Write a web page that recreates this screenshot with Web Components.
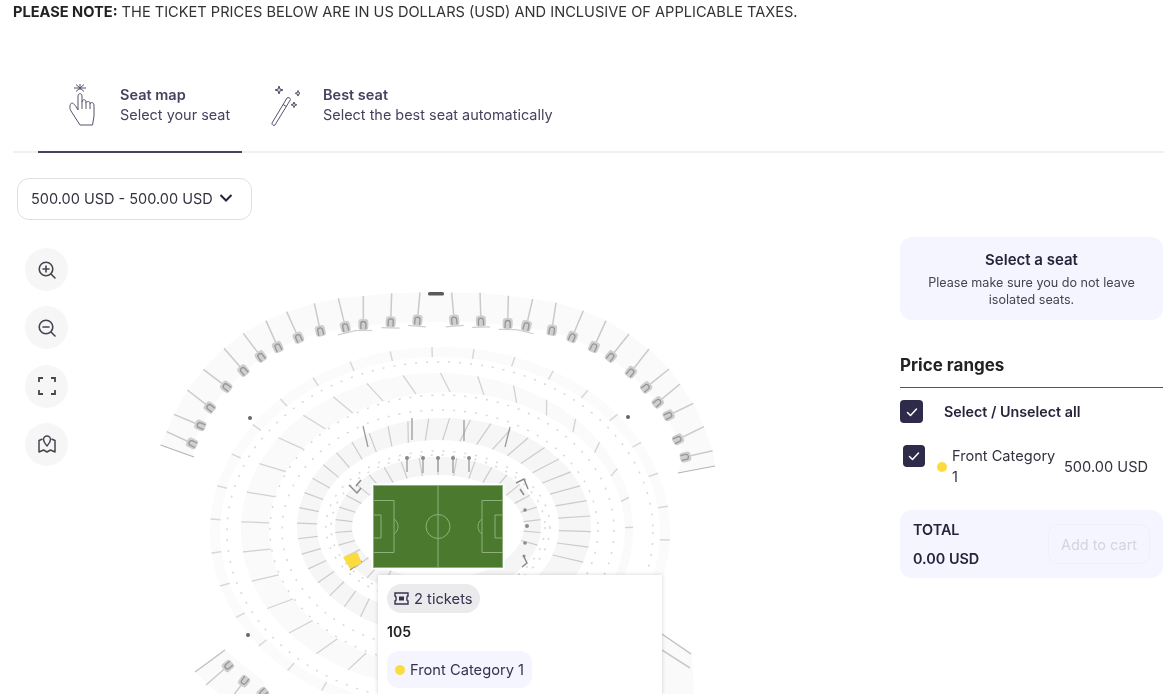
<!DOCTYPE html>
<html lang="en">
<head>
<meta charset="utf-8">
<title>Seat selection</title>
<style>
    html, body { margin: 0; height: 694px; overflow: hidden; background: #fff; }
    body { font-family: Inter, "Liberation Sans", sans-serif; color: #25243a; filter: blur(.4px); }
    svg { display: block; }
</style>
</head>
<body>
<main-layout>
    <note-bar><b>PLEASE NOTE:</b> THE TICKET PRICES BELOW ARE IN US DOLLARS (USD) AND INCLUSIVE OF APPLICABLE TAXES.</note-bar>
    <booking-tabs>
        <tab-item active title-text="Seat map" sub-text="Select your seat" style="--pad:30px;--gap:24px;--w:204px">
            <svg slot="icon" width="28" height="42" viewBox="0 0 28 42" fill="none" stroke="#55536b" stroke-width="1"><path d="M12 0v6M6 4h12M8 .500l8 7M16 .500l-8 7"/><path d="M12 41 3 27C1 24 2 19 4 19c2 0 5 5 6 7V12c0-3 4-3 4 0v6c0-3 4-3 4 0v1c0-2 4-2 4 0v1c0-2 4-2 4 1v11l-1.500 9z"/><path d="M14 18v7M18 19v6M22 20v5"/></svg>
        </tab-item>
        <tab-item title-text="Best seat" sub-text="Select the best seat automatically" style="--pad:28px;--gap:23px;--w:auto">
            <svg slot="icon" width="30" height="42" viewBox="0 0 30 42" fill="none" stroke="#55536b" stroke-width="1"><path d="M17 14c1-1 3.500 0 3.500 1.500L5 41c-1 1-3.500 0-3-2z"/><path d="M13 20.500l3.500 2"/><path d="M9 2l1 3 3 1-3 1-1 3-1-3-3-1 3-1zM28 6.500l.8 2 2 .8-2 .8-.8 2-.8-2-2-.8 2-.8zM24 18l.8 2 2 .8-2 .8-.8 2-.8-2-2-.8 2-.8z" fill="#c9c8d2"/></svg>
        </tab-item>
    </booking-tabs>
    <price-select>500.00 USD - 500.00 USD</price-select>
    <booking-body>
        <seat-map>
            <map-controls slot="controls">
                <map-button><svg width="20" height="20" viewBox="0 0 20 20" fill="none" stroke="#45454f" stroke-width="1.600" stroke-linecap="round"><circle cx="9" cy="9" r="6.800"/><path d="M14 14l4 4M9 6v6M6 9h6"/></svg></map-button>
                <map-button><svg width="20" height="20" viewBox="0 0 20 20" fill="none" stroke="#45454f" stroke-width="1.600" stroke-linecap="round"><circle cx="9" cy="9" r="6.800"/><path d="M14 14l4 4M6 9h6"/></svg></map-button>
                <map-button><svg width="20" height="20" viewBox="0 0 20 20" fill="none" stroke="#45454f" stroke-width="1.800"><path d="M2 6V2h4M14 2h4v4M18 14v4h-4M6 18H2v-4"/></svg></map-button>
                <map-button><svg width="20" height="20" viewBox="0 0 20 20" fill="none" stroke="#45454f" stroke-width="1.500" stroke-linejoin="round"><path d="M10 12C8 9.500 6.500 8 6.500 5.500a3.500 3.500 0 0 1 7 0C13.500 8 12 9.500 10 12z"/><path d="M5.500 5 2 6.500V18l4.500-2 3.500 2 3.500-2 4.500 2V6.500L14.500 5"/></svg></map-button>
            </map-controls>
            <ticket-popup slot="popup" tickets="2 tickets" block="105" category="Front Category 1"></ticket-popup>
        </seat-map>
        <side-panel>
            <info-card heading="Select a seat">Please make sure you do not leave isolated seats.</info-card>
            <price-list>
                <price-row all label="Select / Unselect all"></price-row>
                <price-row label="Front Category 1" price="500.00 USD"></price-row>
            </price-list>
            <total-bar amount="0.00 USD"></total-bar>
        </side-panel>
    </booking-body>
</main-layout>

<script>
const CHECK = `<svg width="14" height="14" viewBox="0 0 14 14" fill="none" stroke="#fff" stroke-width="1.500" stroke-linecap="round" stroke-linejoin="round"><path d="M2.500 7.500 5.500 10.500 11.500 4"/></svg>`;

class MainLayout extends HTMLElement {
    constructor() {
        super();
        this.attachShadow({ mode: 'open' });
        this.shadowRoot.innerHTML = `
            <style>:host { display: block; padding: 0 6px 0 13px; }</style>
            <slot></slot>
        `;
    }
}

class NoteBar extends HTMLElement {
    constructor() {
        super();
        this.attachShadow({ mode: 'open' });
        this.shadowRoot.innerHTML = `
            <style>
                :host { display: block; height: 24px; line-height: 25px; font-size: 14.600px; color: #333; white-space: nowrap; }
                ::slotted(b) { font-weight: 700; color: #222; }
            </style>
            <slot></slot>
        `;
    }
}

class BookingTabs extends HTMLElement {
    constructor() {
        super();
        this.attachShadow({ mode: 'open' });
        this.shadowRoot.innerHTML = `
            <style>
                :host { display: flex; margin-top: 51px; height: 78px; padding-left: 25px; border-bottom: 2px solid #f1f1f2; box-sizing: border-box; }
            </style>
            <slot></slot>
        `;
    }
}

class TabItem extends HTMLElement {
    constructor() {
        super();
        this.attachShadow({ mode: 'open' });
    }

    connectedCallback() {
        const title = this.getAttribute('title-text') || '';
        const sub = this.getAttribute('sub-text') || '';
        this.shadowRoot.innerHTML = `
            <style>
                :host { display: flex; align-items: flex-start; box-sizing: border-box; width: var(--w); height: 78px; padding: 9px 0 0 var(--pad); gap: var(--gap); color: #45425f; }
                :host([active]) { border-bottom: 2px solid #45425f; }
                .title { font-size: 14.500px; font-weight: 600; line-height: 20px; margin-top: 1px; }
                .sub { font-size: 14.450px; line-height: 20px; white-space: nowrap; }
            </style>
            <slot name="icon"></slot>
            <div>
                <div class="title">${title}</div>
                <div class="sub">${sub}</div>
            </div>
        `;
    }
}

class PriceSelect extends HTMLElement {
    constructor() {
        super();
        this.attachShadow({ mode: 'open' });
        this.shadowRoot.innerHTML = `
            <style>
                :host { display: flex; align-items: center; gap: 6px; box-sizing: border-box; width: 235px; height: 42px; margin: 25px 0 0 4px; padding: 0 0 2px 13px; border: 1px solid #dfdfe2; border-radius: 12px; font-size: 14.500px; color: #333340; white-space: nowrap; }
            </style>
            <slot></slot>
            <svg width="14" height="10" viewBox="0 0 14 10" fill="none" stroke="#25243a" stroke-width="2"><path d="M1.500 2 7 7.500 12.500 2"/></svg>
        `;
    }
}

class BookingBody extends HTMLElement {
    constructor() {
        super();
        this.attachShadow({ mode: 'open' });
        this.shadowRoot.innerHTML = `
            <style>:host { display: grid; grid-template-columns: 887px 263px; margin-top: 17px; }</style>
            <slot></slot>
        `;
    }
}

class MapControls extends HTMLElement {
    constructor() {
        super();
        this.attachShadow({ mode: 'open' });
        this.shadowRoot.innerHTML = `
            <style>:host { display: flex; flex-direction: column; gap: 15.300px; }</style>
            <slot></slot>
        `;
    }
}

class MapButton extends HTMLElement {
    constructor() {
        super();
        this.attachShadow({ mode: 'open' });
        this.shadowRoot.innerHTML = `
            <style>:host { display: flex; align-items: center; justify-content: center; width: 43px; height: 43px; border-radius: 50%; background: #f6f6f6; }</style>
            <slot></slot>
        `;
    }
}

// Outer end and gate end of the upper tier aisles, in page pixels
const UPPER_LEFT = [[50,455,130,492],[72,403,155,438],[112,330,183,385],[160,268,232,323],[222,205,283,275],[280,160,335,233],[348,122,385,205],[410,95,447,177],[493,70,512,157],[565,55,587,145],[640,48,640,138],[725,40,722,130],[810,37,802,125]]
    .map(p => [150 + p[0] / 3, 280 + p[1] / 3, 150 + p[2] / 3, 280 + p[3] / 3]);
const UPPER_RIGHT = [[65,38,73,125],[150,38,153,128],[235,47,233,135],[308,57,288,142],[378,68,365,155],[460,92,425,175],[528,122,490,205],[597,162,540,233],[657,207,600,280],[717,267,645,325],[750,312,680,370],[790,370,712,408],[822,440,740,480],[848,512,762,532]]
    .map(p => [430 + p[0] / 3, 280 + p[1] / 3, 430 + p[2] / 3, 280 + p[3] / 3]);

function ellipseBand(cx, cy, rx, ry, cx2, cy2, rx2, ry2, fill) {
    const e = (x, y, a, b) => `M${x - a} ${y}a${a} ${b} 0 1 0 ${a * 2} 0a${a} ${b} 0 1 0 ${-a * 2} 0z`;
    return `<path fill-rule="evenodd" fill="${fill}" d="${e(cx, cy, rx, ry)}${e(cx2, cy2, rx2, ry2)}"/>`;
}

function ringTicks(o, i, angles, color, width) {
    return angles.map(deg => {
        const t = deg * Math.PI / 180;
        const x1 = o[0] + o[2] * Math.cos(t), y1 = o[1] + o[3] * Math.sin(t);
        const x2 = i[0] + i[2] * Math.cos(t), y2 = i[1] + i[3] * Math.sin(t);
        return `<line x1="${x1}" y1="${y1}" x2="${x2}" y2="${y2}" stroke="${color}" stroke-width="${width}"/>`;
    }).join('');
}

function range(from, to, step) {
    const out = [];
    for (let a = from; a <= to; a += step) out.push(a);
    return out;
}

function gate(x, y, x2, y2, base) {
    const deg = Math.atan2(y2 - y, x2 - x) * 180 / Math.PI - 90;
    return `<g transform="translate(${x2} ${y2}) rotate(${deg})">
        <rect x="-5" y="-7" width="10" height="11" rx="3" fill="#cfcfcf"/>
        <path d="M-2.500 3v-5a2.500 2.500 0 0 1 5 0v5" fill="none" stroke="#969696" stroke-width="1.300"/>
        ${base ? '<line x1="-9" y1="4.500" x2="9" y2="4.500" stroke="#cfcfcf" stroke-width="1.200"/>' : ''}
    </g>`;
}

function upperTier() {
    const all = [...UPPER_LEFT, ...UPPER_RIGHT];
    const first = [160.500, 445, 194, 457];
    const last = [715, 466, 678, 473];
    const outer = [first, ...all, last].map(p => `${p[0]},${p[1]}`);
    const inner = [first, ...all, last].map(p => `${p[2]},${p[3]}`).reverse();
    let s = `<polygon fill="#fafafa" points="${outer.concat(inner).join(' ')}"/>`;
    s += all.map(p => `<line x1="${p[0]}" y1="${p[1]}" x2="${p[2]}" y2="${p[3]}" stroke="#cacaca" stroke-width="1.500"/>`).join('');
    s += all.map((p, i) => gate(...p, i >= 9 && i <= 16)).join('');
    s += `<line x1="${first[0]}" y1="${first[1]}" x2="${first[2]}" y2="${first[3]}" stroke="#b5b5b5" stroke-width="1.200"/>`;
    s += `<line x1="${last[0]}" y1="${last[1]}" x2="${last[2]}" y2="${last[3]}" stroke="#b5b5b5" stroke-width="1.200"/>`;
    s += `<rect x="428" y="292" width="16" height="3.500" rx="1.500" fill="#5a5a5a"/>`;
    // lower corners of the upper tier
    s += `<polygon fill="#fafafa" points="195,672 225,650 262,680 272,700 225,700"/>`;
    s += `<line x1="195" y1="672" x2="225" y2="650" stroke="#bdbdbd" stroke-width="1.200"/>`;
    s += [[206,685,229,665],[233,696,245,680],[250,704,264,692]].map(p => `<line x1="${p[0]}" y1="${p[1]}" x2="${p[2]}" y2="${p[3]}" stroke="#cacaca" stroke-width="1.500"/>` + gate(...p)).join('');
    s += `<polygon fill="#fafafa" points="662,634 692,652 694,700 640,700"/>`;
    s += `<line x1="662" y1="634" x2="691" y2="654" stroke="#bdbdbd" stroke-width="1.200"/>`;
    s += `<line x1="662" y1="650" x2="690" y2="668" stroke="#cacaca" stroke-width="1.500"/>`;
    return s;
}

function pitch() {
    const l = `fill="none" stroke="#8fb07c" stroke-width="1"`;
    return `<rect x="371.500" y="483.500" width="133" height="86" rx="1" fill="#fff"/>
        <rect x="373" y="485" width="130" height="83" fill="#4b7a2e"/>
        <g ${l}>
            <rect x="373.500" y="485.500" width="129" height="82"/>
            <path d="M438 485v83"/>
            <circle cx="438" cy="526.500" r="12"/>
            <path d="M373 500.500h21v52h-21M373 515h8v23h-8M394 519a9 9 0 0 1 0 15"/>
            <path d="M503 500.500h-21v52h21M503 515h-8v23h8M482 519a9 9 0 0 0 0 15"/>
        </g>`;
}

class SeatMap extends HTMLElement {
    constructor() {
        super();
        this.attachShadow({ mode: 'open' });
    }

    connectedCallback() {
        this.render();
    }

    render() {
        const ring2o = [440, 532, 230, 185], ring2i = [440, 532, 220, 175];
        const ring3o = [437, 530, 196, 157], ring3i = [447, 530, 178, 138];
        const ring4o = [444, 527, 147, 109], ring4i = [438, 527, 121, 87];
        const ring5o = [438, 527, 103, 70], ring5i = [438, 527, 86, 52];
        const darkTicks = [[363,426,368,447],[412,418,412,440],[464,420,464,441],[510,427,505,447],[407,458,407,472],[423,458,423,473],[438,458,438,472],[453,458,453,473],[469,458,469,472]];
        const seats = `
            ${upperTier()}
            ${ellipseBand(...ring2o, ...ring2i, '#fbfbfb')}
            ${ellipseBand(...ring3o, ...ring3i, '#fafafa')}
            ${ellipseBand(...ring4o, ...ring4i, '#f6f6f6')}
            ${ellipseBand(...ring5o, ...ring5i, '#f5f5f5')}
            ${ringTicks(ring2o, ring2i, range(100, 365, 10.500), '#d8d8d8', 1.500)}
            ${ringTicks(ring3o, ring3i, range(95, 365, 11), '#d2d2d2', 1.300)}
            ${ringTicks(ring4o, ring4i, range(100, 380, 8.200), '#cbcbcb', 1.200)}
            ${ringTicks(ring5o, ring5i, range(102, 380, 10.500), '#cbcbcb', 1.200)}
            <g fill="none" stroke="#d8d8d8" stroke-width="1.500" stroke-dasharray="2 9">
                <ellipse cx="440" cy="532" rx="213" ry="170"/>
                <ellipse cx="442" cy="530" rx="172" ry="135"/>
                <ellipse cx="440" cy="530" rx="158" ry="120"/>
                <ellipse cx="438" cy="527" rx="112" ry="76"/>
                <ellipse cx="438" cy="527" rx="107" ry="72"/>
            </g>
            ${darkTicks.map(p => `<line x1="${p[0]}" y1="${p[1]}" x2="${p[2]}" y2="${p[3]}" stroke="#9a9a9a" stroke-width="1.300"/>`).join('')}
            <g fill="#8a8a8a">
                ${[407, 423, 438, 453, 469].map(x => `<circle cx="${x}" cy="458" r="2"/>`).join('')}
            </g>
            <g fill="#666">
                <circle cx="250" cy="418" r="2"/>
                <circle cx="628" cy="417" r="2"/>
                <circle cx="248" cy="635" r="2"/>
            </g>
            <g fill="none" stroke="#8a8a8a" stroke-width="1.500">
                <path d="M349 485l8 8 4-5M361 480l-5 6"/>
                <path d="M516 483l8-4 4 10M520 489l4 6"/>
                <path d="M522 567l5-4-3-6"/>
                <line x1="350" y1="570" x2="362" y2="561"/>
            </g>
            <g fill="#8a8a8a">
                <circle cx="525" cy="510" r="1.800"/>
                <circle cx="527" cy="526" r="2"/>
                <circle cx="525" cy="543" r="1.800"/>
                <circle cx="524" cy="556" r="1.500"/>
            </g>
            <polygon fill="#fbdc3f" points="343,557 357,552 362,563 350,569"/>
            ${pitch()}
        `;
        this.shadowRoot.innerHTML = `
            <style>
                :host { display: block; position: relative; height: 457px; }
                svg { display: block; filter: blur(.6px); }
                .controls { position: absolute; left: 12px; top: 11px; }
                .popup { position: absolute; left: 365px; top: 338px; }
            </style>
            <svg width="887" height="457" viewBox="13 237 887 457">${seats}</svg>
            <div class="controls"><slot name="controls"></slot></div>
            <div class="popup"><slot name="popup"></slot></div>
        `;
    }
}

class TicketPopup extends HTMLElement {
    constructor() {
        super();
        this.attachShadow({ mode: 'open' });
    }

    connectedCallback() {
        this.shadowRoot.innerHTML = `
            <style>
                :host { display: block; box-sizing: border-box; width: 284px; height: 119px; padding: 9px; background: #fff; box-shadow: 0 0 4px rgba(0,0,0,.18); font-size: 14.700px; }
                .tickets { display: inline-flex; align-items: center; gap: 5px; height: 29px; padding: 0 7px; border-radius: 15px; background: #ebebee; color: #35334f; }
                .block { margin-top: 9px; height: 20px; line-height: 20px; font-size: 14px; font-weight: 600; color: #222; }
                .cat { display: inline-flex; align-items: center; gap: 5px; height: 37px; margin-top: 9px; padding: 0 8px; border-radius: 12px; background: #f4f5fe; color: #35334f; }
                .dot { width: 10px; height: 10px; border-radius: 50%; background: #fbdc3f; }
            </style>
            <div class="tickets">
                <svg width="15" height="13" viewBox="0 0 15 13" fill="none" stroke="#35334f" stroke-width="1.400"><path d="M1 1h13v3c-1.500 0-1.500 5 0 5v3H1V9c1.500 0 1.500-5 0-5z"/><rect x="5" y="4.500" width="5" height="4" fill="#35334f" stroke="none"/></svg>
                ${this.getAttribute('tickets')}
            </div>
            <div class="block">${this.getAttribute('block')}</div>
            <div class="cat"><span class="dot"></span>${this.getAttribute('category')}</div>
        `;
    }
}

class SidePanel extends HTMLElement {
    constructor() {
        super();
        this.attachShadow({ mode: 'open' });
        this.shadowRoot.innerHTML = `
            <style>:host { display: flex; flex-direction: column; }</style>
            <slot></slot>
        `;
    }
}

class InfoCard extends HTMLElement {
    constructor() {
        super();
        this.attachShadow({ mode: 'open' });
    }

    connectedCallback() {
        this.shadowRoot.innerHTML = `
            <style>
                :host { display: block; box-sizing: border-box; height: 83px; padding: 13px 20px 0; border-radius: 12px; background: #f4f5fe; text-align: center; }
                h4 { margin: 0 0 4px; font-size: 15px; font-weight: 600; line-height: 20px; color: #25243a; }
                p { margin: 0; font-size: 12.600px; line-height: 17px; color: #44434f; }
            </style>
            <h4>${this.getAttribute('heading')}</h4>
            <p><slot></slot></p>
        `;
    }
}

class PriceList extends HTMLElement {
    constructor() {
        super();
        this.attachShadow({ mode: 'open' });
        this.shadowRoot.innerHTML = `
            <style>
                :host { display: block; margin-top: 33px; }
                h3 { margin: 0; height: 34px; line-height: 24px; font-size: 17px; font-weight: 700; color: #222; border-bottom: 1.500px solid #555; box-sizing: content-box; }
                .rows { display: flex; flex-direction: column; gap: 22px; padding-top: 12px; }
            </style>
            <h3>Price ranges</h3>
            <div class="rows"><slot></slot></div>
        `;
    }
}

class PriceRow extends HTMLElement {
    constructor() {
        super();
        this.attachShadow({ mode: 'open' });
    }

    connectedCallback() {
        const label = this.getAttribute('label');
        if (this.hasAttribute('all')) {
            this.shadowRoot.innerHTML = `
                <style>
                    :host { display: flex; align-items: center; gap: 21px; height: 23px; font-size: 14.300px; font-weight: 600; color: #25243a; }
                    .box { display: flex; align-items: center; justify-content: center; width: 23px; height: 23px; border-radius: 4px; background: #2d2a4a; }
                </style>
                <div class="box">${CHECK}</div>
                <span>${label}</span>
            `;
            return;
        }
        this.shadowRoot.innerHTML = `
            <style>
                :host { display: flex; align-items: center; padding-left: 3px; height: 44px; font-size: 14.600px; color: #333340; }
                .box { display: flex; align-items: center; justify-content: center; flex: none; align-self: flex-start; width: 22px; height: 22px; border-radius: 4px; background: #2d2a4a; }
                .dot { flex: none; width: 10px; height: 10px; margin: 0 5px 0 12px; border-radius: 50%; background: #fbdc3f; }
                .name { width: 112px; line-height: 21px; }
                .price { white-space: nowrap; }
            </style>
            <div class="box">${CHECK}</div>
            <span class="dot"></span>
            <span class="name">${label}</span>
            <span class="price">${this.getAttribute('price')}</span>
        `;
    }
}

class TotalBar extends HTMLElement {
    constructor() {
        super();
        this.attachShadow({ mode: 'open' });
    }

    connectedCallback() {
        this.shadowRoot.innerHTML = `
            <style>
                :host { display: flex; align-items: center; justify-content: space-between; box-sizing: border-box; height: 68px; margin-top: 21px; padding: 0 13px; border-radius: 12px; background: #f4f5fe; font-size: 14.400px; font-weight: 600; color: #25243a; }
                .lines { display: flex; flex-direction: column; gap: 9px; line-height: 20px; }
                .cart { display: flex; align-items: center; justify-content: center; width: 102px; height: 40px; border: 1px solid #f0f1f8; border-radius: 10px; box-sizing: border-box; font-weight: 400; font-size: 14.500px; color: #d3d4e0; }
            </style>
            <div class="lines"><span>TOTAL</span><span>${this.getAttribute('amount')}</span></div>
            <div class="cart">Add to cart</div>
        `;
    }
}

customElements.define('main-layout', MainLayout);
customElements.define('note-bar', NoteBar);
customElements.define('booking-tabs', BookingTabs);
customElements.define('tab-item', TabItem);
customElements.define('price-select', PriceSelect);
customElements.define('booking-body', BookingBody);
customElements.define('map-controls', MapControls);
customElements.define('map-button', MapButton);
customElements.define('seat-map', SeatMap);
customElements.define('ticket-popup', TicketPopup);
customElements.define('side-panel', SidePanel);
customElements.define('info-card', InfoCard);
customElements.define('price-list', PriceList);
customElements.define('price-row', PriceRow);
customElements.define('total-bar', TotalBar);
</script>
</body>
</html>
